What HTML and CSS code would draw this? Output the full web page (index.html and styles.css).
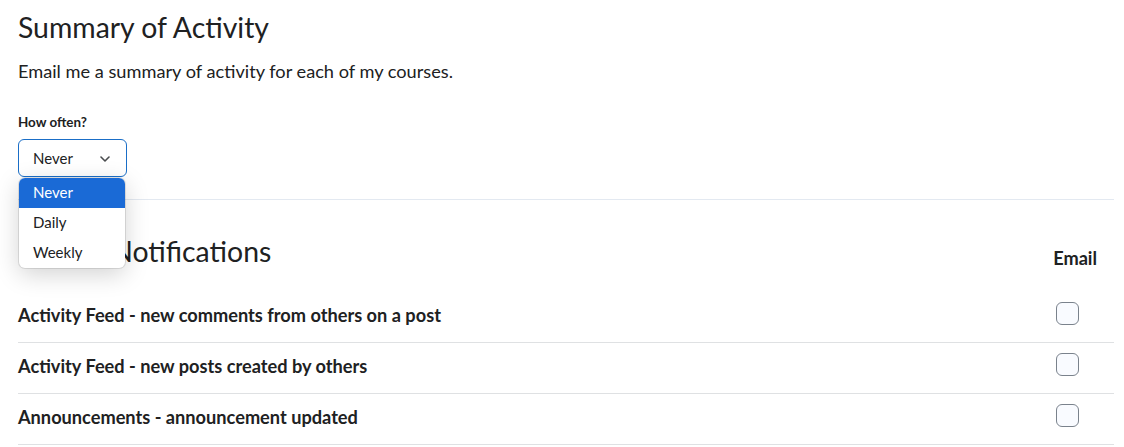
FILE: index.html
```html
<!DOCTYPE html>
<html>
<head>
<meta charset="utf-8">
<link rel="stylesheet" href="styles.css">
</head>
<body>
<div class="page">
  <section class="summary">
    <h2 class="heading">Summary of Activity</h2>
    <p class="desc">Email me a summary of activity for each of my courses.</p>
    <label class="label">How often?</label>
    <div class="select-wrap">
      <div class="select">
        <span>Never</span>
        <svg class="chev" width="10" height="6" viewBox="0 0 10 6"><path d="M1 1l4 4 4-4" fill="none" stroke="#494c4e" stroke-width="1.6" stroke-linecap="round" stroke-linejoin="round"/></svg>
      </div>
      <ul class="options">
        <li class="opt active">Never</li>
        <li class="opt">Daily</li>
        <li class="opt">Weekly</li>
      </ul>
    </div>
  </section>
  <section class="instant">
    <div class="instant-head">
      <h2 class="heading">Instant Notifications</h2>
      <span class="col-label">Email</span>
    </div>
    <div class="row"><span class="row-text">Activity Feed - new comments from others on a post</span><span class="check"></span></div>
    <div class="row"><span class="row-text">Activity Feed - new posts created by others</span><span class="check"></span></div>
    <div class="row"><span class="row-text">Announcements - announcement updated</span><span class="check"></span></div>
  </section>
</div>
</body>
</html>
```
FILE: styles.css
```css
* { box-sizing: border-box; }
body {
  margin: 0;
  font-family: Lato, "Open Sans", sans-serif;
  color: #202122;
  background: #fff;
}
.page {
  padding: 0 10px 0 18px;
}
.heading {
  margin: 0;
  font-size: 28.4px;
  font-weight: 400;
  line-height: 36px;
}
.summary {
  padding-top: 9px;
  padding-bottom: 22px;
  border-bottom: 1px solid #e3e9f1;
}
.desc {
  margin: 14px 0 0;
  font-size: 18.2px;
  line-height: 24px;
}
.label {
  display: block;
  margin-top: 30px;
  font-size: 13.4px;
  font-weight: 700;
  line-height: 18px;
}
.select-wrap {
  position: relative;
  margin-top: 8px;
  width: 109px;
}
.select {
  height: 38px;
  border: 1px solid #1a6ec7;
  border-radius: 6px;
  display: flex;
  align-items: center;
  justify-content: space-between;
  padding: 0 16px 0 14px;
  font-size: 15px;
}
.chev { margin-top: 2px; }
.options {
  position: absolute;
  top: 39px;
  left: 1px;
  width: 106px;
  margin: 0;
  padding: 0;
  list-style: none;
  background: #fff;
  border-radius: 6px;
  box-shadow: 0 6px 24px rgba(0,0,0,0.18), 0 0 0 1px rgba(0,0,0,0.1);
  overflow: hidden;
  z-index: 5;
}
.opt {
  height: 30px;
  line-height: 28px;
  padding-left: 14px;
  font-size: 15px;
}
.opt.active {
  background: #1a6ad6;
  color: #fff;
}
.instant-head {
  display: flex;
  justify-content: space-between;
  align-items: flex-start;
  padding-top: 33px;
  padding-bottom: 23px;
}
.col-label {
  font-size: 18.2px;
  font-weight: 700;
  line-height: 22px;
  margin-top: 14px;
  margin-right: 17px;
}
.row {
  display: flex;
  justify-content: space-between;
  align-items: flex-start;
  height: 51px;
  padding-top: 10px;
  border-bottom: 1px solid #dfe1e3;
}
.row-text {
  font-size: 18.2px;
  font-weight: 700;
  line-height: 26px;
}
.check {
  width: 23px;
  height: 23px;
  border: 1px solid #7a828c;
  border-radius: 6px;
  background: #f9fbff;
  margin-right: 35px;
}
```
